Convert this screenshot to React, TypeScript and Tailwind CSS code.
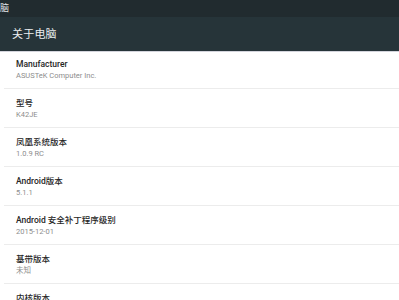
import React from 'react'

type Item = { title: string; summary?: string }

const items: Item[] = [
  { title: 'Manufacturer', summary: 'ASUSTeK Computer Inc.' },
  { title: '型号', summary: 'K42JE' },
  { title: '凤凰系统版本', summary: '1.0.9 RC' },
  { title: 'Android版本', summary: '5.1.1' },
  { title: 'Android 安全补丁程序级别', summary: '2015-12-01' },
  { title: '基带版本', summary: '未知' },
  { title: '内核版本', summary: '' },
]

const font = { fontFamily: 'Roboto, "Noto Sans CJK SC", sans-serif' }

const App = () => {
  return (
    <div className="w-[399px] h-[300px] overflow-hidden bg-white" style={font}>
      {/* status bar */}
      <div className="h-[17px] bg-[#212b2f] flex items-center overflow-hidden">
        <span className="-ml-[9px] text-[9px] leading-none text-[#e4e7e8]">电脑</span>
      </div>

      {/* toolbar */}
      <div className="h-[34px] bg-[#263439] flex items-center pl-[12px]">
        <h1 className="text-[11px] leading-none text-[#eceff0] tracking-[0.2px]">关于电脑</h1>
      </div>
      <div className="h-px bg-[#d3d4dc]" />

      {/* list */}
      <ul>
        {items.map((item, i) => (
          <li
            key={item.title}
            className={`ml-[4px] border-b border-[#ececec] ${i === 0 ? 'h-[37px] pt-[6px]' : 'h-[39px] pt-[8px]'}`}
          >
            <div className="pl-[12px]">
              <p className="text-[8.5px] leading-[12px] text-[#262626] font-medium">{item.title}</p>
              <p className="mt-[1px] text-[7.5px] leading-[10px] text-[#8d8d8d]">{item.summary}</p>
            </div>
          </li>
        ))}
      </ul>
    </div>
  )
}

export default App
